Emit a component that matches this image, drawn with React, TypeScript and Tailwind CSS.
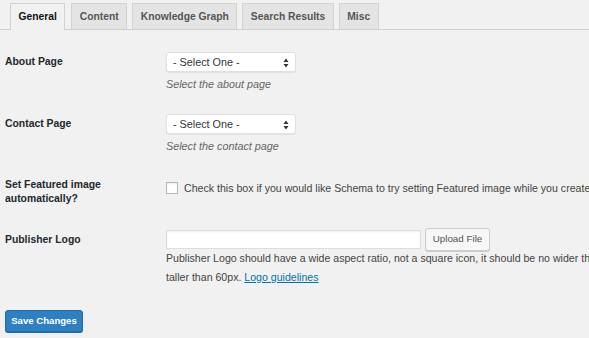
import React from "react";

function SelectBox() {
  return (
    <div className="relative flex h-[20px] w-[130px] items-center rounded-[3px] border border-[#e0e0e0] bg-white pl-[6px] text-[10.8px] text-[#32373c] shadow-[0_1px_1px_rgba(0,0,0,0.06)]">
      <span>- Select One -</span>
      <svg className="absolute right-[6px] top-[5px]" width="6" height="10" viewBox="0 0 6 10">
        <path d="M3 0.5 L5.5 4 L0.5 4 Z" fill="#333" />
        <path d="M3 9.5 L5.5 6 L0.5 6 Z" fill="#333" />
      </svg>
    </div>
  );
}

export default function App() {
  const tabs = ["General", "Content", "Knowledge Graph", "Search Results", "Misc"];
  return (
    <div className="h-[338px] w-[589px] overflow-hidden bg-[#f1f1f1] font-['Liberation_Sans',Arial,sans-serif] text-[#23282d]">
      <div className="flex h-[30px] items-end gap-[5px] border-b border-[#cfcfcf] pl-[10px]">
        {tabs.map((t, i) => (
          <div
            key={t}
            className={
              i === 0
                ? "-mb-px mr-[1px] flex h-[27px] items-center border border-b-0 border-[#d2d2d2] bg-[#f1f1f1] px-[7.5px] pb-[1px] text-[10.3px] font-bold text-[#111]"
                : "flex h-[26px] items-center border border-b-0 border-[#d2d2d2] bg-[#e4e4e4] px-[7.5px] text-[10.3px] font-bold text-[#555]"
            }
          >
            {t}
          </div>
        ))}
      </div>

      <div className="pl-[5px]">
        <div className="mt-[22px] flex">
          <div className="flex h-[20px] w-[161px] shrink-0 items-center text-[10.4px] font-bold">About Page</div>
          <div>
            <SelectBox />
            <div className="mt-[4px] text-[10.8px] italic leading-[16px] text-[#666]">Select the about page</div>
          </div>
        </div>

        <div className="mt-[22px] flex">
          <div className="flex h-[20px] w-[161px] shrink-0 items-center text-[10.4px] font-bold">Contact Page</div>
          <div>
            <SelectBox />
            <div className="mt-[4px] text-[10.8px] italic leading-[16px] text-[#666]">Select the contact page</div>
          </div>
        </div>

        <div className="mt-[24px] flex">
          <div className="w-[161px] shrink-0 text-[10.4px] font-bold leading-[14px]">
            Set Featured image
            <br />
            automatically?
          </div>
          <div className="flex items-start whitespace-nowrap pt-[4px]">
            <span className="mr-[6px] block h-[12px] w-[12px] shrink-0 border border-[#b4b9be] bg-white shadow-[inset_0_1px_2px_rgba(0,0,0,0.08)]" />
            <span className="text-[10.6px] leading-[13px] text-[#444]">
              Check this box if you would like Schema to try setting Featured image while you create
            </span>
          </div>
        </div>

        <div className="mt-[22px] flex">
          <div className="flex h-[23px] w-[161px] shrink-0 items-center text-[10.4px] font-bold">Publisher Logo</div>
          <div>
            <div className="flex items-center">
              <div className="h-[19px] w-[255px] border border-[#ddd] bg-white shadow-[inset_0_1px_2px_rgba(0,0,0,0.07)]" />
              <div className="ml-[4px] flex h-[23px] w-[65px] items-center justify-center rounded-[3px] border border-[#ccc] bg-[#f7f7f7] text-[9.8px] text-[#555] shadow-[0_1px_0_#ccc]">
                Upload File
              </div>
            </div>
            <div className="mt-[-2px] whitespace-nowrap text-[10.6px] leading-[19px] text-[#444]">
              Publisher Logo should have a wide aspect ratio, not a square icon, it should be no wider than 600px, and no
              <br />
              taller than 60px. <span className="text-[#0073aa] underline">Logo guidelines</span>
            </div>
          </div>
        </div>

        <div className="mt-[23px] flex h-[22px] w-[78px] items-center justify-center rounded-[3px] border border-[#1f6ea8] bg-[#2d80c1] text-[9.6px] font-bold text-white shadow-[0_1px_0_#1f6ea8]">
          Save Changes
        </div>
      </div>
    </div>
  );
}
